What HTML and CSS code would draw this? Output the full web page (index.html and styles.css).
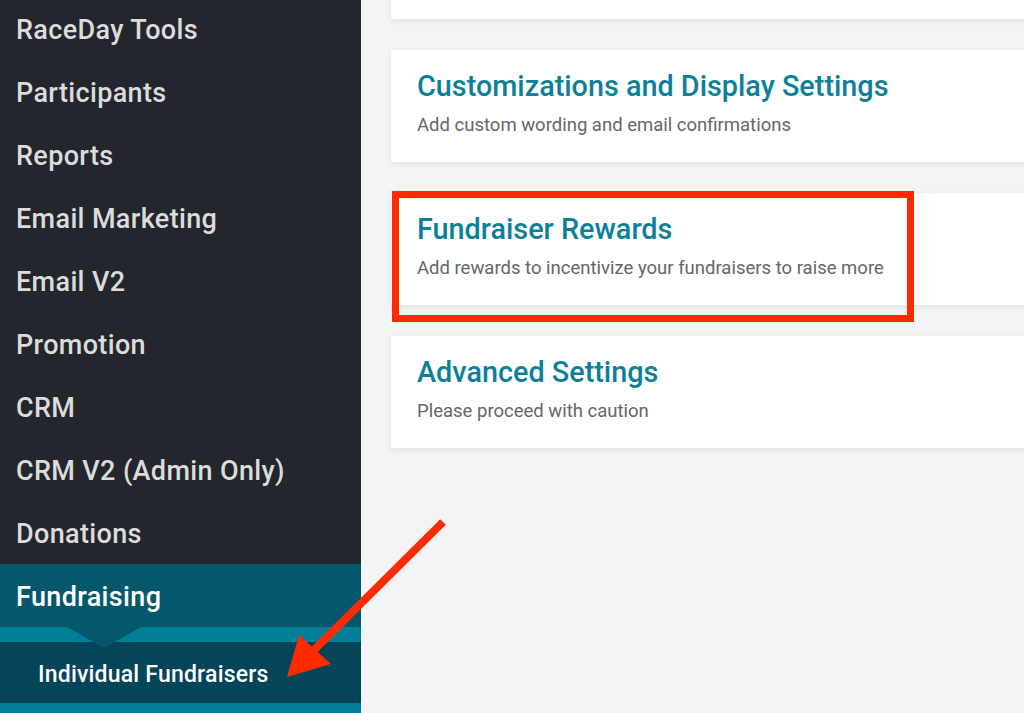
FILE: index.html
```html
<!DOCTYPE html>
<html lang="en">
<head>
<meta charset="utf-8">
<title>Fundraising Settings</title>
<link rel="stylesheet" href="styles.css">
</head>
<body>
<div class="page">
  <nav class="sidebar">
    <ul class="nav">
      <li class="nav-item">RaceDay Tools</li>
      <li class="nav-item">Participants</li>
      <li class="nav-item">Reports</li>
      <li class="nav-item">Email Marketing</li>
      <li class="nav-item">Email V2</li>
      <li class="nav-item">Promotion</li>
      <li class="nav-item">CRM</li>
      <li class="nav-item">CRM V2 (Admin Only)</li>
      <li class="nav-item">Donations</li>
      <li class="nav-item active">Fundraising</li>
    </ul>
    <div class="submenu">
      <div class="sub-item">Individual Fundraisers</div>
    </div>
  </nav>
  <main class="main">
    <section class="card card-top"></section>
    <section class="card">
      <h2 class="card-title">Customizations and Display Settings</h2>
      <p class="card-text">Add custom wording and email confirmations</p>
    </section>
    <section class="card">
      <h2 class="card-title">Fundraiser Rewards</h2>
      <p class="card-text">Add rewards to incentivize your fundraisers to raise more</p>
    </section>
    <section class="card">
      <h2 class="card-title">Advanced Settings</h2>
      <p class="card-text">Please proceed with caution</p>
    </section>
  </main>
  <div class="highlight"></div>
  <svg class="arrow" width="1024" height="713" viewBox="0 0 1024 713">
    <line x1="443" y1="522" x2="312" y2="652" stroke="#ff2a00" stroke-width="8"/>
    <polygon points="287,677 299,635 331,664" fill="#ff2a00"/>
  </svg>
</div>
</body>
</html>
```

FILE: styles.css
```css
* { box-sizing: border-box; }
html, body { margin: 0; padding: 0; }
body {
  font-family: Roboto, "Liberation Sans", Arial, sans-serif;
  background: #f3f4f6;
  width: 1024px;
  height: 713px;
  overflow: hidden;
}
.page {
  position: relative;
  display: flex;
  width: 1024px;
  height: 713px;
  overflow: hidden;
}
.sidebar {
  width: 361px;
  flex: 0 0 361px;
  background: #23262d;
  height: 100%;
  display: flex;
  flex-direction: column;
}
.nav {
  list-style: none;
  margin: -3px 0 0 0;
  padding: 0;
}
.nav-item {
  height: 63px;
  display: flex;
  align-items: center;
  padding: 2px 0 0 16px;
  font-size: 27px;
  font-weight: 500;
  color: #dcdcdc;
  letter-spacing: 0.35px;
}
.nav-item.active {
  background: #05586b;
  color: #ffffff;
  position: relative;
}
.nav-item.active::after {
  content: "";
  position: absolute;
  left: 67px;
  top: 63px;
  width: 0;
  height: 0;
  border-left: 37px solid transparent;
  border-right: 37px solid transparent;
  border-top: 21px solid #05586b;
  z-index: 2;
}
.submenu {
  background: #047f9a;
  padding: 15px 0 10px;
  flex: 1;
}
.sub-item {
  background: #05455a;
  height: 61px;
  display: flex;
  align-items: center;
  padding: 3px 0 0 38px;
  font-size: 23px;
  font-weight: 500;
  color: #ffffff;
  letter-spacing: 0.2px;
}
.main {
  flex: 1;
  padding: 0 0 0 30px;
  display: flex;
  flex-direction: column;
  gap: 31px;
  margin-top: -93px;
}
.card {
  background: #ffffff;
  width: 700px;
  height: 112px;
  padding: 19px 26px 0;
  box-shadow: 0 2px 6px rgba(0, 0, 0, 0.08);
}
.card-top { flex: 0 0 112px; }
.card-title {
  margin: 0;
  font-size: 28.8px;
  line-height: 34px;
  font-weight: 500;
  color: #0d8099;
}
.card-text {
  margin: 11px 0 0;
  font-size: 18.5px;
  line-height: 22px;
  color: #666666;
}
.highlight {
  position: absolute;
  left: 392px;
  top: 191px;
  width: 522px;
  height: 131px;
  border: 7px solid #ff2a00;
}
.arrow {
  position: absolute;
  left: 0;
  top: 0;
  pointer-events: none;
}
```
